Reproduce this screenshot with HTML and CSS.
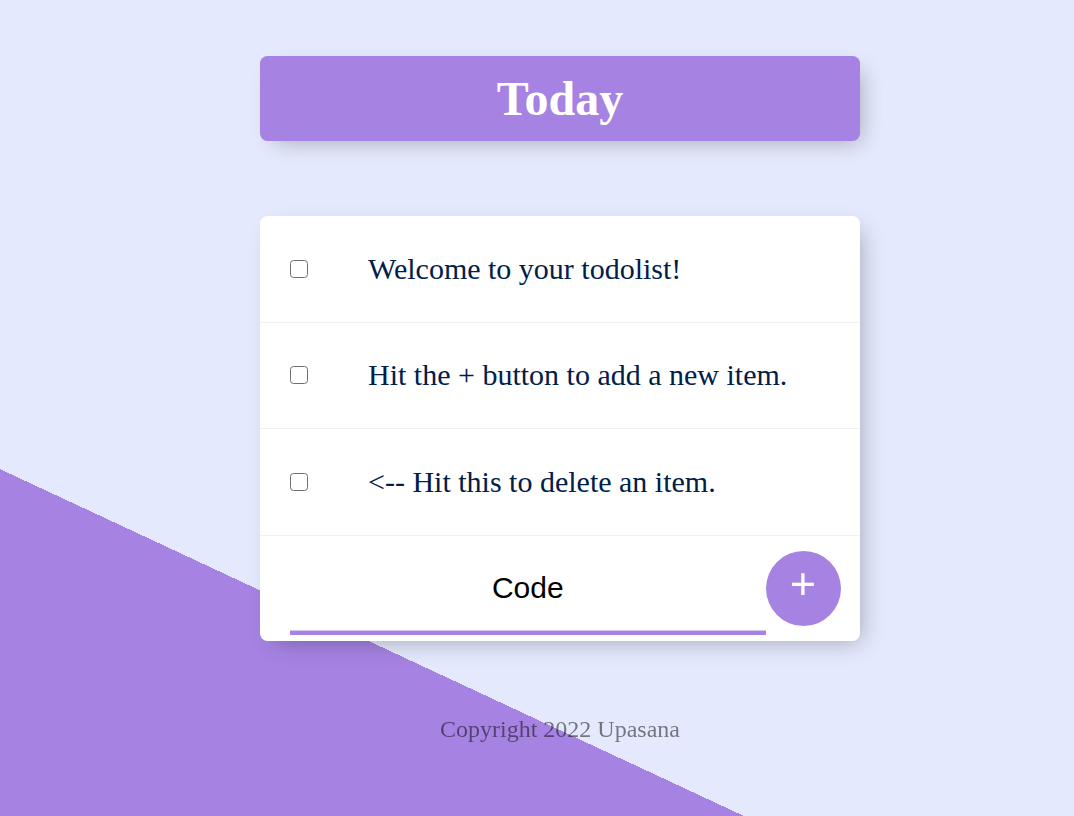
FILE: index.html
```html
<!DOCTYPE html>
<html lang="en">
<head>
<meta charset="utf-8">
<title>To-Do List</title>
<link rel="stylesheet" href="styles.css">
</head>
<body>
<main class="column">
  <div class="box heading">
    <h1 class="title">Today</h1>
  </div>
  <div class="box list">
    <div class="item">
      <input class="check" type="checkbox">
      <p class="text">Welcome to your todolist!</p>
    </div>
    <div class="item">
      <input class="check" type="checkbox">
      <p class="text">Hit the + button to add a new item.</p>
    </div>
    <div class="item">
      <input class="check" type="checkbox">
      <p class="text">&lt;-- Hit this to delete an item.</p>
    </div>
    <form class="item add-form" action="/" method="post">
      <input class="new-item" type="text" name="newItem" value="Code" autocomplete="off" autofocus>
      <button class="add-btn" type="submit" name="list">+</button>
    </form>
  </div>
  <footer class="footer">Copyright 2022 Upasana</footer>
</main>
</body>
</html>
```

FILE: styles.css
```css
html {
  background-color: #E4E9FD;
  background-image: linear-gradient(25deg, #A683E3 50%, #E4E9FD 50%);
  background-repeat: no-repeat;
  background-size: 1074px 1439px;
  background-position: 0 0;
  font-family: "Liberation Serif", "Times New Roman", serif;
}

body {
  margin: 0;
  overflow: hidden;
  height: 816px;
}

.column {
  width: 600px;
  margin-left: 260px;
  padding-top: 56px;
}

.box {
  background: #ffffff;
  border-radius: 7.5px;
  box-shadow: 7.5px 7.5px 22.5px -7.5px rgba(0, 0, 0, 0.3);
}

.heading {
  background-color: #A683E3;
  text-align: center;
}

.title {
  margin: 0;
  padding: 15px;
  color: #ffffff;
  font-size: 48px;
  font-weight: bold;
  line-height: 55px;
}

.list {
  margin-top: 75px;
}

.item {
  min-height: 105.5px;
  display: flex;
  align-items: center;
  border-bottom: 1px solid #F1F1F1;
  margin: 0;
}

.item:last-child {
  border-bottom: 0;
  min-height: 105px;
}

.check {
  appearance: none;
  -webkit-appearance: none;
  box-sizing: border-box;
  width: 18px;
  height: 18px;
  margin: 30px;
  flex: none;
  border: 1.5px solid #6f6f6f;
  border-radius: 3.5px;
  background: #ffffff;
}

.text {
  margin: 0;
  padding: 30px;
  font-size: 30px;
  font-weight: normal;
  color: #00204a;
}

.add-form {
  padding-left: 30px;
}

.new-item {
  box-sizing: border-box;
  width: 475.5px;
  height: 93px;
  padding: 1.5px 3px;
  border: none;
  background: transparent;
  text-align: center;
  font-family: "Liberation Sans", Arial, sans-serif;
  font-size: 30px;
  color: #000000;
  caret-color: #000000;
  outline: none;
  box-shadow: inset 0 -4.5px 0 0 #A683E3;
  margin: 0;
}

.add-btn {
  width: 75px;
  height: 75px;
  border-radius: 50%;
  border: 0;
  background-color: #A683E3;
  color: #ffffff;
  font-family: "Liberation Sans", Arial, sans-serif;
  font-size: 45px;
  line-height: 1;
  padding: 0 0 9px 0;
  margin: 0;
  flex: none;
}

.footer {
  margin-top: 75px;
  text-align: center;
  font-size: 24px;
  color: rgba(0, 0, 0, 0.5);
}
```
